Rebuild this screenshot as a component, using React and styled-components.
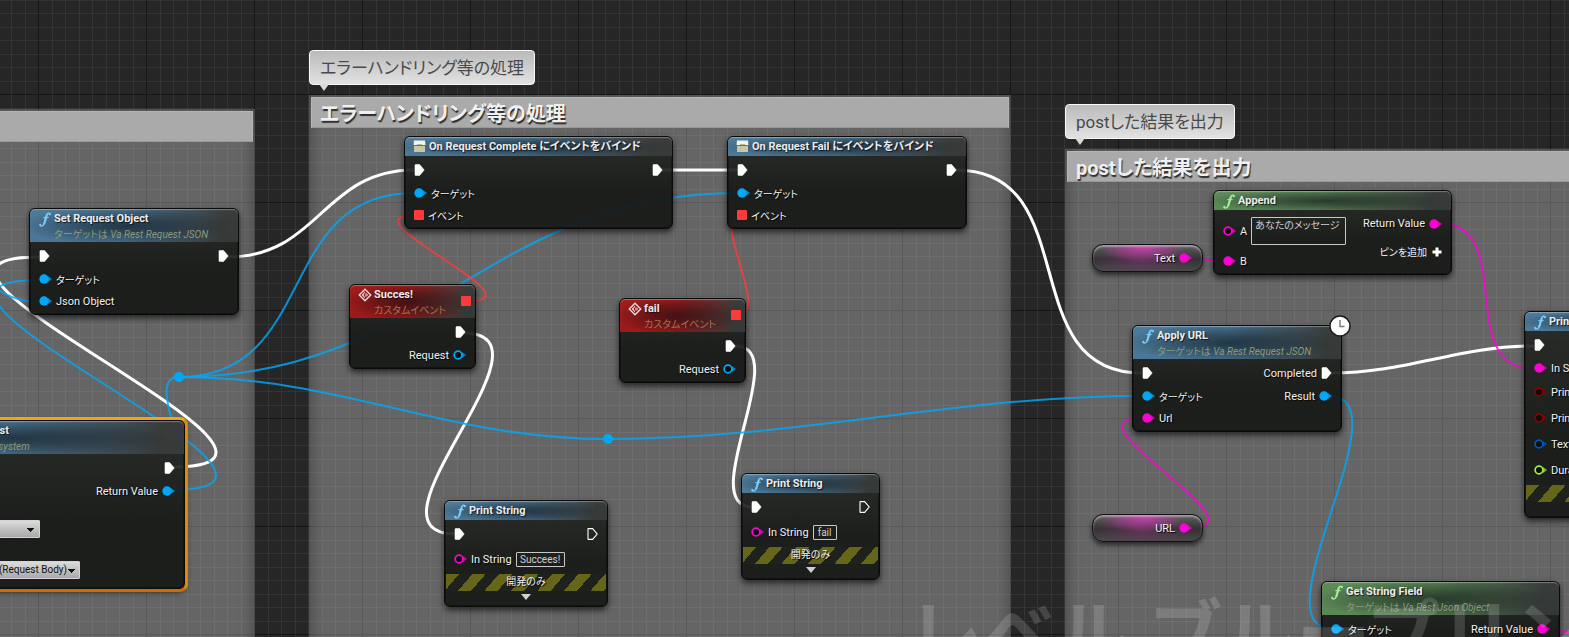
import React from "react";
import styled, { createGlobalStyle, css } from "styled-components";

const CYAN = "#00a8f8";
const PINK = "#ff00d4";
const RED = "#ff3a3a";
const WHITE = "#ffffff";

const TITLE_TINTS = {
  blue: "84, 138, 176",
  green: "104, 158, 98",
  red: "186, 24, 24",
};

const WIRES = [
  { from: [172, 467], to: [39, 257], color: WHITE },
  { from: [228, 257], to: [414, 170], color: WHITE },
  { from: [662, 170], to: [738, 170], color: WHITE },
  { from: [956, 170], to: [1142, 373], color: WHITE },
  { from: [463, 333], to: [456, 534], color: WHITE },
  { from: [735, 346], to: [753, 507], color: WHITE },
  { from: [1331, 373], to: [1534, 346], color: WHITE },
  { from: [172, 490], to: [39, 280], color: CYAN },
  { from: [-70, 258], to: [39, 302], color: CYAN },
  { from: [172, 490], to: [179, 377], color: CYAN },
  { from: [179, 377], to: [414, 193], color: CYAN },
  { from: [179, 377], to: [738, 193], color: CYAN },
  { from: [179, 377], to: [608, 439], color: CYAN },
  { from: [608, 439], to: [1142, 396], color: CYAN },
  { from: [1329, 396], to: [1333, 629], color: CYAN },
  { from: [468, 301], to: [416, 215], color: RED },
  { from: [738, 314], to: [742, 215], color: RED },
  { from: [1188, 258], to: [1223, 261], color: PINK },
  { from: [1188, 528], to: [1143, 418], color: PINK },
  { from: [1438, 223], to: [1534, 369], color: PINK },
  { from: [1546, 629], to: [1620, 650], color: PINK },
];

// Backward wires bulge out more than forward ones
function wirePath([x1, y1], [x2, y2]) {
  const dx = x2 - x1;
  const dy = Math.abs(y2 - y1);
  const bend = Math.round(dx >= 0 ? (dx + dy) / 3 : (-2 * dx + 1.5 * dy) / 3);
  return `M${x1} ${y1} C${x1 + bend} ${y1} ${x2 - bend} ${y2} ${x2} ${y2}`;
}

function Grid() {
  const steps = [14, 27, 41, 54, 68, 81, 95];
  return (
    <Layer aria-hidden="true">
      <pattern id="grid" x="38" y="94" width="108" height="108" patternUnits="userSpaceOnUse">
        {steps.map((s) => (
          <g key={s} fill="#343434">
            <rect x={s} y="0" width="1" height="108" />
            <rect x="0" y={s} width="108" height="1" />
          </g>
        ))}
        <rect width="1" height="108" fill="#161616" />
        <rect width="108" height="1" fill="#161616" />
      </pattern>
      <rect width="100%" height="100%" fill="url(#grid)" />
    </Layer>
  );
}

function Wires() {
  return (
    <Layer aria-hidden="true">
      {WIRES.map((w, i) => (
        <path
          key={i}
          d={wirePath(w.from, w.to)}
          fill="none"
          stroke={w.color}
          strokeWidth={w.color === WHITE ? 3 : 2}
          opacity={w.color === WHITE ? 1 : 0.82}
        />
      ))}
      <circle cx="179" cy="377" r="5" fill={CYAN} />
      <circle cx="608" cy="439" r="5" fill={CYAN} />
    </Layer>
  );
}

function ExecPin({ open }) {
  return (
    <svg width="11" height="12" viewBox="0 0 11 12">
      <path
        d="M1 1.2 Q1 .6 1.6 .6 H5.6 L10.2 6 L5.6 11.4 H1.6 Q1 11.4 1 10.8 Z"
        fill={open ? "none" : "#fff"}
        stroke="#fff"
        strokeWidth={open ? 1.1 : 0.6}
      />
    </svg>
  );
}

function DataPin({ color = CYAN, open }) {
  return (
    <svg width="13" height="10" viewBox="0 0 13 10">
      <path d="M9 2 L13 5 L9 8 Z" fill={color} opacity="0.75" />
      <circle
        cx="5"
        cy="5"
        r={open ? 3.9 : 4.7}
        fill={open ? "#0c0d0c" : color}
        stroke={color}
        strokeWidth={open ? 1.7 : 0}
      />
    </svg>
  );
}

function FunctionIcon({ color }) {
  return (
    <svg width="13" height="15" viewBox="0 0 13 15">
      <g transform="translate(1 0)" fill="none" stroke={color}>
        <path d="M11.3 2.4 C10.6 .5 8.2 .8 7.5 3.2 L5 12 C4.4 14 2.2 14.6 1 13.2" strokeWidth="1.5" />
        <path d="M7.9 3 L5.2 12" strokeWidth="2" />
        <path d="M4.2 5.6 H9.6" strokeWidth="1.1" />
        <circle cx="10.8" cy="2.2" r="1.1" fill={color} stroke="none" />
        <circle cx="1.3" cy="12.9" r="1.1" fill={color} stroke="none" />
      </g>
    </svg>
  );
}

function BindIcon() {
  return (
    <svg width="13" height="13" viewBox="0 0 13 13">
      <path d="M1 0.5 H12 L12.5 5 H0.5 Z" fill="#f1f4e6" />
      <rect x="0.5" y="5" width="12" height="1" fill="#6f7362" />
      <rect x="1" y="6" width="11" height="6" fill="#c9c6a6" />
      <rect x="4" y="4" width="5" height="1" fill="#b5b49c" />
    </svg>
  );
}

function EventIcon() {
  return (
    <svg width="14" height="14" viewBox="0 0 14 14">
      <path d="M7 1.2 L12.8 7 L7 12.8 L1.2 7 Z" fill="none" stroke="#f2dede" strokeWidth="1.3" />
      <path d="M7 3.4 V5.6 H5.8 V8.4 H7 V10.6 L3.6 7 Z" fill="#f2dede" />
      <path d="M7 5.6 H8.6 V8.4 H7 M8.6 4.9 L10.6 7 L8.6 9.1 Z" fill="#c98f8f" />
    </svg>
  );
}

function ClockBadge() {
  return (
    <Badge width="22" height="22" viewBox="0 0 22 22">
      <circle cx="11" cy="11" r="10" fill="#fff" stroke="#1a1a1a" strokeWidth="1.4" />
      <path d="M11 5 V11.5 H15.5" fill="none" stroke="#777" strokeWidth="1.4" />
    </Badge>
  );
}

function Header({ tint = "blue", icon, title, sub, delegate }) {
  return (
    <HeaderStyle $tint={TITLE_TINTS[tint]}>
      <HeaderIcon>
        {icon || <FunctionIcon color={tint === "green" ? "#a5ec98" : "#7ccbfa"} />}
      </HeaderIcon>
      <div>
        <NodeTitle>{title}</NodeTitle>
        {sub && <NodeSub $red={tint === "red"}>{sub}</NodeSub>}
      </div>
      {delegate && <HeaderPin />}
    </HeaderStyle>
  );
}

function ExecRow({ label, noIn, noOut, open }) {
  return (
    <Row $h={24}>
      {noIn ? <span /> : <ExecPin />}
      {!noOut && (
        <Pin>
          {label}
          <ExecPin open={open} />
        </Pin>
      )}
    </Row>
  );
}

function BindNode({ x, y, w, title }) {
  return (
    <Node $x={x} $y={y} $w={w}>
      <Header icon={<BindIcon />} title={title} />
      <Body>
        <ExecRow />
        <Row>
          <Pin $kana>
            <DataPin />
            ターゲット
          </Pin>
        </Row>
        <Row>
          <Pin $kana>
            <SquarePin />
            イベント
          </Pin>
        </Row>
      </Body>
    </Node>
  );
}

function EventNode({ x, y, title }) {
  return (
    <Node $x={x} $y={y} $w={127}>
      <Header tint="red" icon={<EventIcon />} title={title} sub="カスタムイベント" delegate />
      <Body>
        <ExecRow noIn />
        <Row>
          <span />
          <Pin>
            Request
            <DataPin open />
          </Pin>
        </Row>
      </Body>
    </Node>
  );
}

function PrintNode({ x, y, w, id, value, inputWidth }) {
  return (
    <Node $x={x} $y={y} $w={w}>
      <Header title="Print String" />
      <Body>
        <ExecRow open />
        <Row $h={26}>
          <Pin>
            <DataPin color={PINK} open />
            <label htmlFor={id}>In String</label>
            <PinInput id={id} defaultValue={value} $w={inputWidth} />
          </Pin>
        </Row>
      </Body>
      <DevOnly>開発のみ</DevOnly>
      <Expand type="button" aria-label="詳細を表示">
        <Triangle />
      </Expand>
    </Node>
  );
}

function VariableNode({ x, y, name }) {
  return (
    <Variable $x={x} $y={y}>
      <Pin>
        {name}
        <DataPin color={PINK} />
      </Pin>
    </Variable>
  );
}

function CommentBox({ x, y, w, title, bubble }) {
  return (
    <Comment $x={x} $y={y} $w={w}>
      <CommentTitle>{title}</CommentTitle>
      {bubble && <Bubble>{bubble}</Bubble>}
    </Comment>
  );
}

function App() {
  return (
    <>
      <GlobalStyle />
      <Canvas>
        <Grid />
        <CommentBox x={-400} y={109} w={655} />
        <CommentBox
          x={309}
          y={95}
          w={702}
          title="エラーハンドリング等の処理"
          bubble="エラーハンドリング等の処理"
        />
        <CommentBox
          x={1065}
          y={149}
          w={900}
          title="postした結果を出力"
          bubble="postした結果を出力"
        />
        <Wires />

        <Node $x={29} $y={208} $w={210}>
          <Header title="Set Request Object" sub="ターゲットは Va Rest Request JSON" />
          <Body>
            <ExecRow />
            <Row>
              <Pin $kana>
                <DataPin />
                ターゲット
              </Pin>
            </Row>
            <Row>
              <Pin>
                <DataPin />
                Json Object
              </Pin>
            </Row>
          </Body>
        </Node>

        <Node $x={-135} $y={420} $w={320} $selected>
          <Header title="Construct Json Request" sub="ターゲットは Va Rest Subsystem" />
          <Body>
            <ExecRow />
            <Row>
              <Pin $kana>
                <DataPin />
                ターゲット
              </Pin>
              <Pin>
                Return Value
                <DataPin />
              </Pin>
            </Row>
            <Field>
              <label htmlFor="verb">Verb</label>
              <Select id="verb" $w={161} defaultValue="POST">
                <option>POST</option>
              </Select>
            </Field>
            <Field>
              <label htmlFor="content">Content Type</label>
              <Select id="content" $w={201} $right>
                <option>x-www-form-urlencoded (Request Body)</option>
              </Select>
            </Field>
          </Body>
        </Node>

        <BindNode x={404} y={136} w={269} title="On Request Complete にイベントをバインド" />
        <BindNode x={727} y={136} w={240} title="On Request Fail にイベントをバインド" />
        <EventNode x={349} y={284} title="Succes!" />
        <EventNode x={619} y={298} title="fail" />
        <PrintNode x={444} y={500} w={164} id="ok-string" value="Succees!" inputWidth={49} />
        <PrintNode x={741} y={473} w={139} id="fail-string" value="fail" inputWidth={24} />

        <VariableNode x={1092} y={244} name="Text" />
        <VariableNode x={1092} y={514} name="URL" />

        <Node $x={1213} $y={190} $w={239}>
          <Header tint="green" title="Append" />
          <Columns>
            <AppendSide>
              <Pin>
                <DataPin color={PINK} open />
                <label htmlFor="append-a">A</label>
                <PinArea id="append-a" defaultValue="あなたのメッセージ" />
              </Pin>
              <Row>
                <Pin>
                  <DataPin color={PINK} />B
                </Pin>
              </Row>
            </AppendSide>
            <AppendSide $right>
              <Pin>
                Return Value
                <DataPin color={PINK} />
              </Pin>
              <AddPin type="button">
                ピンを追加
                <svg width="10" height="10" viewBox="0 0 10 10">
                  <path d="M5 0.5 V9.5 M0.5 5 H9.5" stroke="#fff" strokeWidth="3" />
                </svg>
              </AddPin>
            </AppendSide>
          </Columns>
        </Node>

        <Node $x={1132} $y={325} $w={210}>
          <Header title="Apply URL" sub="ターゲットは Va Rest Request JSON" />
          <Body>
            <ExecRow label="Completed" />
            <Row>
              <Pin $kana>
                <DataPin />
                ターゲット
              </Pin>
              <Pin>
                Result
                <DataPin />
              </Pin>
            </Row>
            <Row>
              <Pin>
                <DataPin color={PINK} />
                Url
              </Pin>
            </Row>
          </Body>
          <ClockBadge />
        </Node>

        <Node $x={1524} $y={311} $w={180}>
          <Header title="Print String" />
          <Body>
            <ExecRow noOut />
            <Row>
              <Pin>
                <DataPin color={PINK} />
                In String
              </Pin>
            </Row>
            <Row $h={26}>
              <Pin>
                <DataPin color="#8c0000" open />
                Print to Screen
              </Pin>
            </Row>
            <Row $h={26}>
              <Pin>
                <DataPin color="#8c0000" open />
                Print to Log
              </Pin>
            </Row>
            <Row $h={26}>
              <Pin>
                <DataPin color="#0055c0" open />
                Text Color
              </Pin>
            </Row>
            <Row $h={26}>
              <Pin>
                <DataPin color="#9af03c" open />
                Duration
              </Pin>
            </Row>
          </Body>
          <DevOnly>開発のみ</DevOnly>
          <Expand type="button" aria-label="詳細を隠す" />
        </Node>

        <Node $x={1321} $y={581} $w={239}>
          <Header tint="green" title="Get String Field" sub="ターゲットは Va Rest Json Object" />
          <Body>
            <Row $h={24}>
              <Pin $kana>
                <DataPin />
                ターゲット
              </Pin>
              <Pin>
                Return Value
                <DataPin color={PINK} />
              </Pin>
            </Row>
            <Row>
              <Pin>
                <DataPin color={PINK} open />
                Field Name
              </Pin>
            </Row>
          </Body>
        </Node>

        <Watermark>レベル ブループリント</Watermark>
      </Canvas>
    </>
  );
}

const GlobalStyle = createGlobalStyle`
  * {
    box-sizing: border-box;
  }
  body {
    margin: 0;
    background: #262626;
    font-family: Roboto, "Noto Sans CJK JP", sans-serif;
    font-size: 11px;
    font-feature-settings: "palt";
    font-synthesis: none;
    color: #f0f0f0;
  }
  svg {
    display: block;
    flex: none;
  }
  input, textarea, select, button {
    font: inherit;
    font-feature-settings: inherit;
    color: inherit;
  }
`;

const Canvas = styled.main`
  position: relative;
  min-height: 100vh;
  overflow: hidden;
  background: #262626;
  white-space: nowrap;
`;

const Layer = styled.svg`
  position: absolute;
  inset: 0;
  width: 100%;
  height: 100%;
`;

const Comment = styled.section`
  position: absolute;
  left: ${({ $x }) => $x}px;
  top: ${({ $y }) => $y}px;
  bottom: -40px;
  width: ${({ $w }) => $w}px;
  padding: 2px;
  background: rgba(255, 255, 255, 0.29);
  box-shadow: inset 0 0 16px rgba(0, 0, 0, 0.35);
`;

const CommentTitle = styled.h2`
  height: 31px;
  margin: 0;
  padding-left: 8px;
  background: #aaaaaa;
  border: 1px solid #b6b6b6;
  border-bottom-color: #989898;
  color: #f0f0f0;
  font-size: 20px;
  font-weight: bold;
  line-height: 33px;
  text-shadow: 1px 2px 1px #2c2c2c;
`;

const Bubble = styled.div`
  position: absolute;
  left: 0;
  bottom: calc(100% + 10px);
  height: 35px;
  padding: 0 10px;
  border: 1px solid #f8f8f8;
  border-radius: 4px;
  background: linear-gradient(#bababa, #e2e2e2);
  color: #4a4a4a;
  font-size: 17px;
  line-height: 35px;

  &::after {
    content: "";
    position: absolute;
    left: 9px;
    top: 100%;
    border: 5px solid transparent;
    border-top: 7px solid #dadada;
    border-bottom: 0;
  }
`;

const Node = styled.article`
  position: absolute;
  left: ${({ $x }) => $x}px;
  top: ${({ $y }) => $y}px;
  width: ${({ $w }) => $w}px;
  padding-bottom: 2px;
  border: 1px solid #0a0a0a;
  border-radius: 6px;
  background: linear-gradient(rgba(36, 39, 36, 0.9), rgba(22, 24, 22, 0.92) 60%);
  box-shadow:
    inset 0 0 0 1px rgba(0, 0, 0, 0.35),
    0 3px 6px rgba(0, 0, 0, 0.65);

  ${({ $selected }) =>
    $selected &&
    css`
      padding-bottom: 4px;
      &::before {
        content: "";
        position: absolute;
        inset: -4px;
        border: 3px solid;
        border-color: #f0a808 #e08a04 #d06a00;
        border-radius: 8px;
      }
    `}
`;

const HeaderStyle = styled.header`
  display: flex;
  padding-left: 8px;
  border-radius: 5px 5px 0 0;
  box-shadow: inset 0 1px 1px rgba(255, 255, 255, 0.35);
  background:
    radial-gradient(ellipse 50% 60% at 46% 52%, rgba(8, 12, 16, 0.6), rgba(8, 12, 16, 0.4) 40%, transparent),
    linear-gradient(100deg, rgba(${({ $tint }) => $tint}, 0.82) 45%, rgba(66, 70, 70, 0.6) 92%);
`;

const HeaderIcon = styled.span`
  width: 16px;
  padding-top: 3px;
`;

const HeaderPin = styled.span`
  width: 10px;
  height: 10px;
  margin: 11px 4px 0 auto;
  border-radius: 1px;
  background: ${RED};
`;

const NodeTitle = styled.h3`
  margin: 0;
  color: #ececec;
  font-size: 11px;
  font-weight: bold;
  line-height: 19px;
  text-shadow: 1px 1px 1px rgba(0, 0, 0, 0.7);
`;

const NodeSub = styled.p`
  height: 14px;
  margin: 0;
  color: ${({ $red }) => ($red ? "#a5714f" : "#8a9a7c")};
  font-size: 10px;
  font-style: italic;
  line-height: 13px;
`;

const Body = styled.div`
  padding: 2px 9px 0;
`;

const Row = styled.div`
  display: flex;
  align-items: center;
  justify-content: space-between;
  height: ${({ $h = 22 }) => $h}px;
`;

const Pin = styled.div`
  display: flex;
  align-items: center;
  gap: 4px;
  font-size: ${({ $kana }) => ($kana ? 10 : 11)}px;
  text-shadow: 1px 1px 1px #000;
`;

const SquarePin = styled.span`
  width: 10px;
  height: 10px;
  border-radius: 1px;
  background: ${RED};
`;

const PinInput = styled.input`
  width: ${({ $w }) => $w}px;
  height: 15px;
  padding: 0 2px;
  border: 1px solid #c8c8c8;
  border-radius: 1px;
  background: transparent;
  color: #d0d0d0;
  font-size: 10px;
  text-align: center;
`;

const PinArea = styled.textarea`
  width: 95px;
  height: 28px;
  padding: 0 3px;
  border: 1px solid #c8c8c8;
  border-radius: 1px;
  background: transparent;
  color: #d0d0d0;
  font-size: 10px;
  line-height: 15px;
  resize: none;
  overflow: hidden;
`;

const Columns = styled.div`
  display: flex;
  justify-content: space-between;
  padding: 7px 9px 0;
`;

const AppendSide = styled.div`
  display: flex;
  flex-direction: column;
  gap: ${({ $right }) => ($right ? 14 : 5)}px;
  align-items: ${({ $right }) => ($right ? "flex-end" : "flex-start")};
`;

const AddPin = styled.button`
  display: flex;
  align-items: center;
  gap: 5px;
  padding: 0;
  border: 0;
  background: none;
  font-size: 10px;
`;

const DevOnly = styled.div`
  height: 17px;
  margin: 2px 1px 0;
  background: repeating-linear-gradient(131deg, #66661a 0 10px, #1f211d 10px 20px);
  font-size: 10px;
  text-align: center;
  line-height: 16px;
  text-shadow: 1px 1px 1px #000;
`;

const Expand = styled.button`
  display: flex;
  justify-content: center;
  width: 100%;
  height: 13px;
  padding: 3px 0 0;
  border: 0;
  background: none;
`;

const Triangle = styled.span`
  border: 5px solid transparent;
  border-top: 6px solid #d0d0d0;
  border-bottom: 0;
`;

const Field = styled.div`
  display: flex;
  flex-direction: column;
  padding: 2px 0 0 4px;
  margin-bottom: 5px;
  line-height: 16px;
`;

const Select = styled.select`
  appearance: none;
  width: ${({ $w }) => $w}px;
  height: 18px;
  padding: 0 ${({ $right }) => ($right ? 12 : 20)}px 0 4px;
  border: 1px solid #d4d4d4;
  border-radius: 1px;
  background:
    conic-gradient(from 315deg at 50% 100%, #111 0 90deg, transparent 0)
      right ${({ $right }) => ($right ? 4 : 5)}px top 7px / 7px 4px no-repeat,
    linear-gradient(#dcdcdc, #a8a8a8);
  color: #111;
  font-size: 10px;
  text-align-last: ${({ $right }) => ($right ? "right" : "left")};
`;

const Variable = styled.article`
  position: absolute;
  left: ${({ $x }) => $x}px;
  top: ${({ $y }) => $y}px;
  display: flex;
  justify-content: flex-end;
  width: 111px;
  height: 28px;
  padding-right: 10px;
  border: 1px solid #111;
  border-radius: 11px;
  background:
    radial-gradient(ellipse 40% 55% at 46% 12%, rgba(215, 60, 185, 0.8), transparent),
    radial-gradient(ellipse 50% 60% at 45% 60%, rgba(150, 50, 130, 0.4), transparent),
    linear-gradient(rgba(95, 95, 95, 0.92), rgba(45, 45, 45, 0.92) 55%, rgba(70, 70, 70, 0.92));
  box-shadow:
    inset 0 2px 2px rgba(255, 255, 255, 0.4),
    0 3px 5px rgba(0, 0, 0, 0.6);
`;

const Badge = styled.svg`
  position: absolute;
  top: -11px;
  right: -10px;
`;

const Watermark = styled.div`
  position: absolute;
  left: 908px;
  top: 600px;
  color: rgba(255, 255, 255, 0.15);
  font-size: 74px;
  font-weight: bold;
  line-height: 72px;
  font-feature-settings: normal;
  pointer-events: none;
`;

export default App;
